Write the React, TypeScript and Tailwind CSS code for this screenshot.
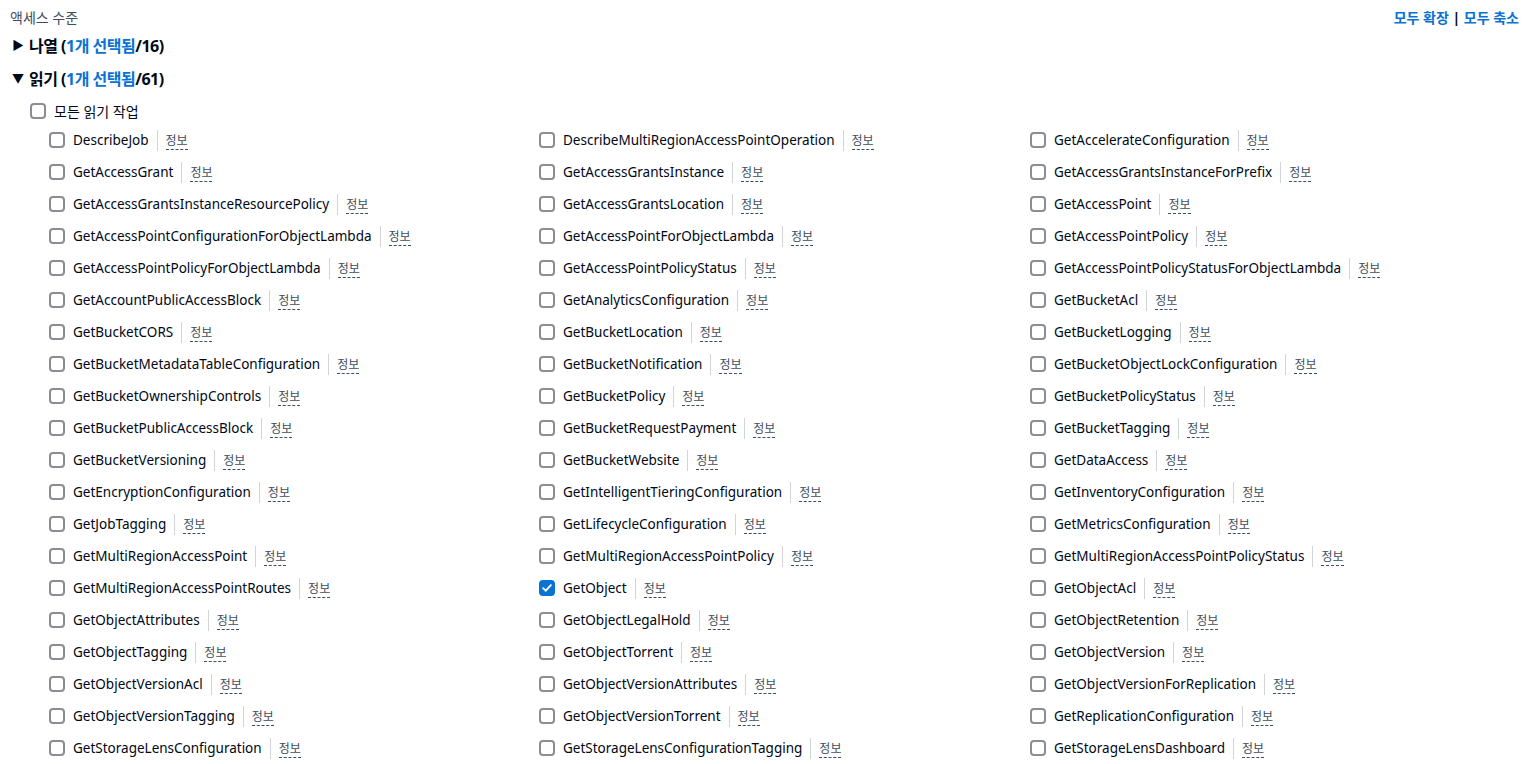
import { useState } from "react";

const actions: string[] = [
  "DescribeJob", "DescribeMultiRegionAccessPointOperation", "GetAccelerateConfiguration",
  "GetAccessGrant", "GetAccessGrantsInstance", "GetAccessGrantsInstanceForPrefix",
  "GetAccessGrantsInstanceResourcePolicy", "GetAccessGrantsLocation", "GetAccessPoint",
  "GetAccessPointConfigurationForObjectLambda", "GetAccessPointForObjectLambda", "GetAccessPointPolicy",
  "GetAccessPointPolicyForObjectLambda", "GetAccessPointPolicyStatus", "GetAccessPointPolicyStatusForObjectLambda",
  "GetAccountPublicAccessBlock", "GetAnalyticsConfiguration", "GetBucketAcl",
  "GetBucketCORS", "GetBucketLocation", "GetBucketLogging",
  "GetBucketMetadataTableConfiguration", "GetBucketNotification", "GetBucketObjectLockConfiguration",
  "GetBucketOwnershipControls", "GetBucketPolicy", "GetBucketPolicyStatus",
  "GetBucketPublicAccessBlock", "GetBucketRequestPayment", "GetBucketTagging",
  "GetBucketVersioning", "GetBucketWebsite", "GetDataAccess",
  "GetEncryptionConfiguration", "GetIntelligentTieringConfiguration", "GetInventoryConfiguration",
  "GetJobTagging", "GetLifecycleConfiguration", "GetMetricsConfiguration",
  "GetMultiRegionAccessPoint", "GetMultiRegionAccessPointPolicy", "GetMultiRegionAccessPointPolicyStatus",
  "GetMultiRegionAccessPointRoutes", "GetObject", "GetObjectAcl",
  "GetObjectAttributes", "GetObjectLegalHold", "GetObjectRetention",
  "GetObjectTagging", "GetObjectTorrent", "GetObjectVersion",
  "GetObjectVersionAcl", "GetObjectVersionAttributes", "GetObjectVersionForReplication",
  "GetObjectVersionTagging", "GetObjectVersionTorrent", "GetReplicationConfiguration",
  "GetStorageLensConfiguration", "GetStorageLensConfigurationTagging", "GetStorageLensDashboard",
];

function Checkbox({ checked, onClick }: { checked: boolean; onClick: () => void }) {
  return (
    <button
      onClick={onClick}
      className={
        checked
          ? "w-4 h-4 shrink-0 rounded-[4px] bg-[#0972d3] border-2 border-[#0972d3] flex items-center justify-center"
          : "w-4 h-4 shrink-0 rounded-[4px] bg-white border-2 border-[#8c8c94]"
      }
    >
      {checked && (
        <svg viewBox="0 0 14 14" className="w-3 h-3" fill="none">
          <path d="M2.5 7.2 L5.6 10.2 L11.5 3.6" stroke="white" strokeWidth="2.2" strokeLinecap="round" strokeLinejoin="round" />
        </svg>
      )}
    </button>
  );
}

function Section({ open, title, total }: { open: boolean; title: string; total: number }) {
  return (
    <div className="flex items-center h-[33px] pl-[12px] text-[16px] tracking-[-0.5px] font-bold text-[#000716]">
      <span className="w-[17px] text-[12px] leading-none tracking-normal">{open ? "▼" : "▶"}</span>
      <span>
        {title} (<span className="text-[#0972d3]">1개 선택됨</span>/{total})
      </span>
    </div>
  );
}

export default function App() {
  const [checked, setChecked] = useState<Record<string, boolean>>({ GetObject: true });
  const [all, setAll] = useState(false);

  return (
    <div
      className="w-[1526px] min-h-[764px] bg-white text-[#000716] text-[13.5px]"
      style={{ fontFamily: '"Noto Sans", "Noto Sans CJK KR", sans-serif' }}
    >
      <div className="flex justify-between items-center pl-[10px] pr-[7px] h-[29px] pt-[6px]">
        <span className="text-[14px] text-[#414d5c]">액세스 수준</span>
        <span className="text-[14px] font-bold text-[#0972d3]">
          모두 확장 <span className="text-[#000716]">|</span> 모두 축소
        </span>
      </div>
      <Section open={false} title="나열" total={16} />
      <Section open={true} title="읽기" total={61} />
      <div className="flex items-center gap-2 pl-[30px] h-[32px] text-[14px]">
        <Checkbox checked={all} onClick={() => setAll(!all)} />
        <span>모든 읽기 작업</span>
      </div>
      <div className="grid grid-cols-[490px_491px_1fr] pl-[49px] -mt-[3px]">
        {actions.map((a) => (
          <div key={a} className="flex items-center h-[32px]">
            <Checkbox checked={!!checked[a]} onClick={() => setChecked({ ...checked, [a]: !checked[a] })} />
            <span className="ml-2">{a}</span>
            <span className="mx-2 w-px h-[21px] bg-[#d1d5db]" />
            <span className="text-[12px] text-[#414d5c] leading-[16px] border-b border-dashed border-[#414d5c] mt-[2px]">정보</span>
          </div>
        ))}
      </div>
    </div>
  );
}
